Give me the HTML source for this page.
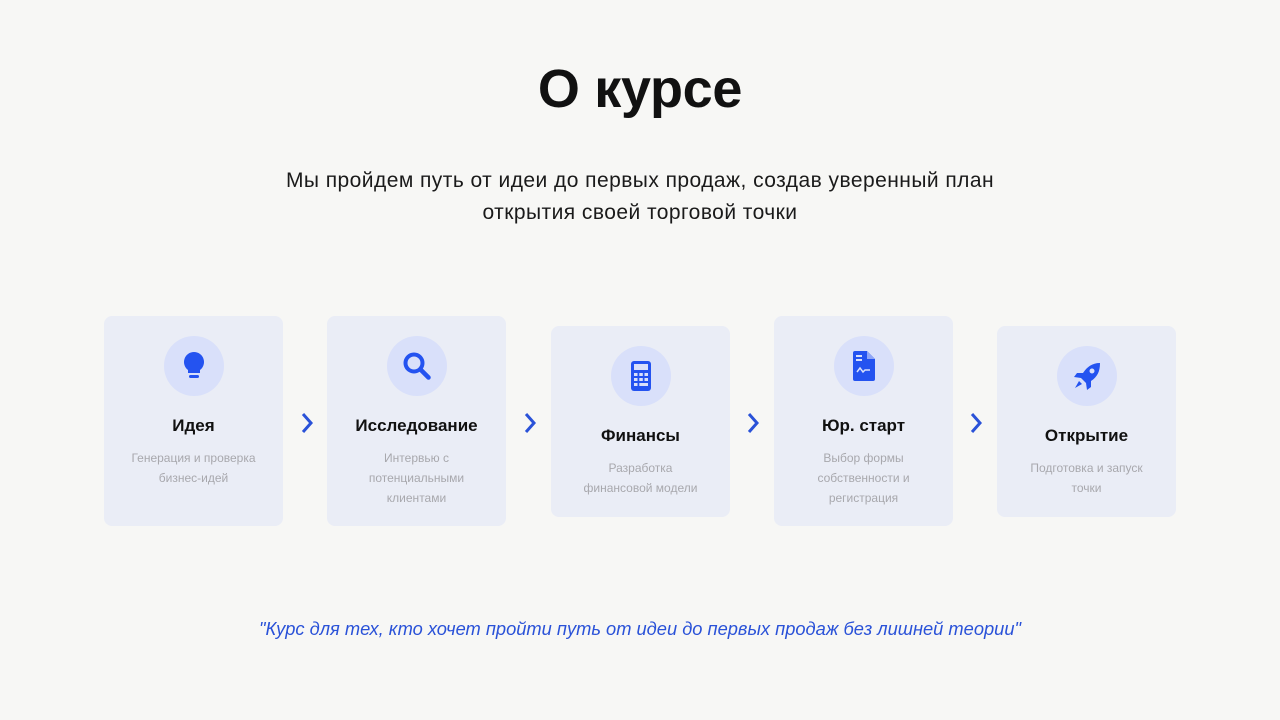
<!DOCTYPE html>
<html><head><meta charset="utf-8"><style>
*{margin:0;padding:0;box-sizing:border-box}
body{width:1280px;height:720px;background:#f7f7f5;font-family:"Liberation Sans",sans-serif;position:relative;overflow:hidden}
h1{position:absolute;top:58px;left:0;width:1280px;text-align:center;font-size:54px;font-weight:bold;color:#111;letter-spacing:-0.3px}
.sub{position:absolute;top:165px;left:0;width:1280px;text-align:center;font-size:21px;letter-spacing:0.45px;line-height:32px;color:#1a1a1a}
.card{position:absolute;width:179px;background:#eaedf6;border-radius:8px;text-align:center}
.circ{width:60px;height:60px;border-radius:50%;background:#d9e0fa;margin:20px auto 0;display:flex;align-items:center;justify-content:center}
.t{font-size:17px;font-weight:bold;color:#111;margin-top:19px;line-height:22px}
.d{font-size:12px;color:#a8a8ad;line-height:20px;margin-top:11px;padding:0 14px}
.ch{position:absolute;top:411px;width:14px;height:24px}
.q{position:absolute;top:618px;left:0;width:1280px;text-align:center;font-size:18.3px;font-style:italic;color:#2a52d8}
</style></head><body>
<h1>О курсе</h1>
<div class="sub">Мы пройдем путь от идеи до первых продаж, создав уверенный план<br>открытия своей торговой точки</div>

<div class="card" style="left:104px;top:316px;height:210px">
<div class="circ"><svg width="24" height="30" viewBox="0 0 24 30"><path d="M12 1a10 10 0 0 0-6 18v3h12v-3A10 10 0 0 0 12 1z" fill="#2453f0"/><rect x="7" y="24" width="10" height="3" rx="1.5" fill="#2453f0"/></svg></div>
<div class="t">Идея</div><div class="d">Генерация и проверка<br>бизнес-идей</div></div>

<svg class="ch" style="left:300px" viewBox="0 0 14 24"><path d="M3 3l8 9-8 9" stroke="#2a52d8" stroke-width="3" fill="none"/></svg>

<div class="card" style="left:327px;top:316px;height:210px">
<div class="circ"><svg width="32" height="32" viewBox="0 0 32 32"><circle cx="13" cy="13" r="8.5" stroke="#2453f0" stroke-width="4" fill="none"/><path d="M19.5 19.5l8 8" stroke="#2453f0" stroke-width="4.5" stroke-linecap="round"/></svg></div>
<div class="t">Исследование</div><div class="d">Интервью с<br>потенциальными<br>клиентами</div></div>

<svg class="ch" style="left:523px" viewBox="0 0 14 24"><path d="M3 3l8 9-8 9" stroke="#2a52d8" stroke-width="3" fill="none"/></svg>

<div class="card" style="left:551px;top:326px;height:191px">
<div class="circ"><svg width="20" height="30" viewBox="0 0 20 30"><rect x="0" y="0" width="20" height="30" rx="3" fill="#2453f0"/><rect x="3" y="3" width="14" height="6" fill="#d9e0fa"/><g fill="#d9e0fa"><rect x="3" y="12" width="3.5" height="3"/><rect x="8.3" y="12" width="3.5" height="3"/><rect x="13.5" y="12" width="3.5" height="3"/><rect x="3" y="17" width="3.5" height="3"/><rect x="8.3" y="17" width="3.5" height="3"/><rect x="13.5" y="17" width="3.5" height="3"/><rect x="3" y="22" width="3.5" height="3"/><rect x="8.3" y="22" width="8.7" height="3"/></g></svg></div>
<div class="t">Финансы</div><div class="d">Разработка<br>финансовой модели</div></div>

<svg class="ch" style="left:746px" viewBox="0 0 14 24"><path d="M3 3l8 9-8 9" stroke="#2a52d8" stroke-width="3" fill="none"/></svg>

<div class="card" style="left:774px;top:316px;height:210px">
<div class="circ"><svg width="22" height="30" viewBox="0 0 22 30"><path d="M2 0h12l8 8v20a2 2 0 0 1-2 2H2a2 2 0 0 1-2-2V2a2 2 0 0 1 2-2z" fill="#2453f0"/><path d="M14 0v8h8" fill="#8fa6f7"/><rect x="3" y="4" width="6" height="2" fill="#d9e0fa"/><rect x="3" y="8" width="6" height="2" fill="#d9e0fa"/><path d="M4 21l3-4 3 4 2-2h5" stroke="#d9e0fa" stroke-width="1.5" fill="none"/></svg></div>
<div class="t">Юр. старт</div><div class="d">Выбор формы<br>собственности и<br>регистрация</div></div>

<svg class="ch" style="left:969px" viewBox="0 0 14 24"><path d="M3 3l8 9-8 9" stroke="#2a52d8" stroke-width="3" fill="none"/></svg>

<div class="card" style="left:997px;top:326px;height:191px">
<div class="circ"><svg width="30" height="30" viewBox="0 0 30 30"><path d="M28 2c-8 0-13 4-17 10l-6 0-3 4 7 1 5 5 1 7 4-3 0-6c6-4 9-9 9-18z" fill="#2453f0"/><circle cx="20" cy="10" r="2.5" fill="#d9e0fa"/><path d="M7 20l-4 7 7-4z" fill="#2453f0"/></svg></div>
<div class="t">Открытие</div><div class="d">Подготовка и запуск<br>точки</div></div>

<div class="q">"Курс для тех, кто хочет пройти путь от идеи до первых продаж без лишней теории"</div>
</body></html>
